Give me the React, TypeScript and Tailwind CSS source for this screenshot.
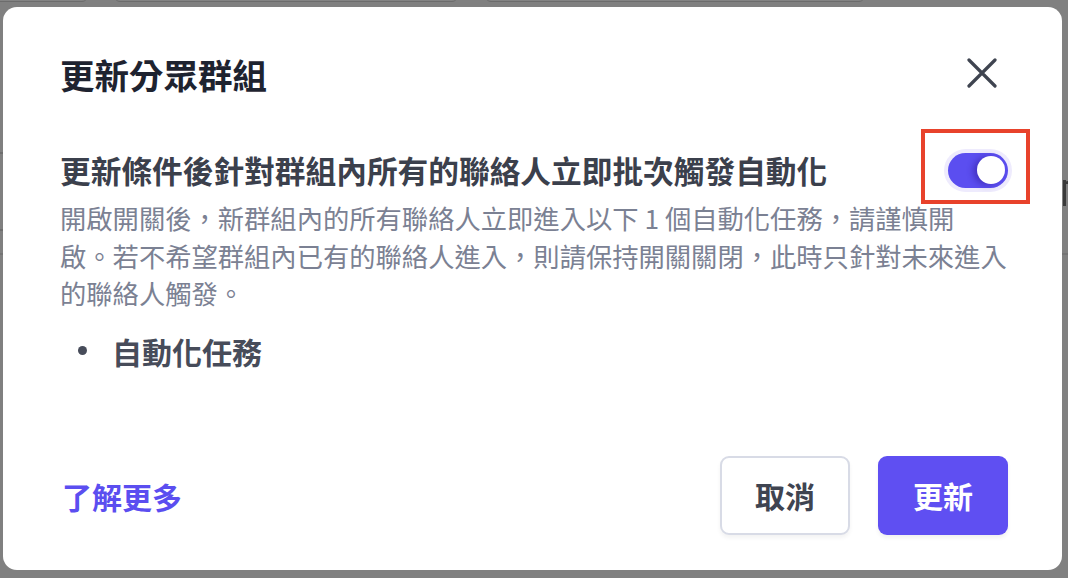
import React from "react";

const automations = ["自動化任務"];

function CloseIcon() {
  return (
    <svg width="30" height="30" viewBox="0 0 30 30" fill="none">
      <path
        d="M2 2 L28 28 M28 2 L2 28"
        stroke="#3f4450"
        strokeWidth="3.2"
        strokeLinecap="round"
      />
    </svg>
  );
}

function Toggle({ on }: { on: boolean }) {
  return (
    <button
      className={
        "relative flex items-center w-[60px] h-[35px] rounded-full ring-[4px] ring-[#eeebfd] px-[3.5px] " +
        (on ? "bg-[#5b4ef0] justify-end" : "bg-gray-300 justify-start")
      }
    >
      <span className="block w-[28px] h-[28px] rounded-full bg-white shadow-[-4px_1px_6px_rgba(40,20,140,0.45)]" />
    </button>
  );
}

export default function App() {
  return (
    <div className="relative w-[1068px] h-[578px] overflow-hidden bg-[#808080] font-['Noto_Sans_CJK_TC','Noto_Sans',sans-serif]">
      {/* page behind the overlay */}
      <div className="absolute -top-[10px] left-[-8px] w-[96px] h-[12px] rounded-md border border-[#6c6c6c] bg-[#838383]" />
      <div className="absolute -top-[10px] left-[114px] w-[344px] h-[12px] rounded-md border border-[#6c6c6c] bg-[#838383]" />
      <div className="absolute -top-[10px] left-[485px] w-[380px] h-[12px] rounded-md border border-[#6c6c6c] bg-[#838383]" />
      <div className="absolute top-[152px] left-0 w-[4px] h-[2px] bg-[#6e6e6e]" />
      <div className="absolute top-[229px] left-0 w-[4px] h-[2px] bg-[#6e6e6e]" />
      <div className="absolute top-[253px] left-0 w-full h-[2px] bg-[#747474]" />
      <div className="absolute top-[180px] left-[1063px] w-[3px] h-[26px] bg-[#3a3a3a]" />
      <div className="absolute top-[181px] left-[1065px] w-[4px] h-[3px] rounded-tl-full bg-[#3a3a3a]" />

      {/* dialog */}
      <div className="absolute left-[3px] top-[7px] w-[1059px] h-[563px] bg-white rounded-[14px] flex flex-col pl-[57px] pr-[54px] pt-[43px] pb-[35px]">
        <div className="flex items-center justify-between h-[48px]">
          <h2 className="text-[34.5px] leading-[48px] font-bold text-[#1e2330]">
            更新分眾群組
          </h2>
          <span className="mr-[11px] mt-[-2px]">
            <CloseIcon />
          </span>
        </div>

        <div className="flex items-center justify-between h-[40px] mt-[52px]">
          <h3 className="text-[30.7px] leading-[40px] font-semibold text-[#3b404c]">
            更新條件後針對群組內所有的聯絡人立即批次觸發自動化
          </h3>
          <Toggle on />
        </div>

        <p className="mt-[9px] w-[960px] text-[26.3px] leading-[37.5px] text-[#7b8193]">
          開啟開關後，新群組內的所有聯絡人立即進入以下 1 個自動化任務，請謹慎開
          <br />
          啟。若不希望群組內已有的聯絡人進入，則請保持開關關閉，此時只針對未來進入
          <br />
          的聯絡人觸發。
        </p>

        <ul className="mt-[19px] flex flex-col">
          {automations.map((name) => (
            <li key={name} className="flex items-center h-[40px] pl-[18px]">
              <span className="w-[9px] h-[9px] rounded-full bg-[#474c5a]" />
              <span className="ml-[25px] text-[30px] leading-[40px] font-semibold text-[#474c5a]">
                {name}
              </span>
            </li>
          ))}
        </ul>

        <div className="mt-auto flex items-center justify-between">
          <a className="ml-[2px] text-[30px] leading-[40px] font-bold text-[#5b4ef0]">
            了解更多
          </a>
          <div className="flex items-center gap-[28px]">
            <button className="w-[130px] h-[79px] rounded-[9px] border-2 border-[#d8dbe6] bg-white text-[30px] font-bold text-[#3f4451] shadow-[0_3px_4px_rgba(0,0,0,0.05)]">
              取消
            </button>
            <button className="w-[130px] h-[79px] rounded-[9px] bg-[#5f4ff2] text-[30px] font-bold text-white shadow-[0_3px_4px_rgba(0,0,0,0.06)]">
              更新
            </button>
          </div>
        </div>
      </div>

      {/* annotation */}
      <div className="absolute left-[921px] top-[129px] w-[109px] h-[75px] border-[4px] border-[#e8422b]" />
    </div>
  );
}
